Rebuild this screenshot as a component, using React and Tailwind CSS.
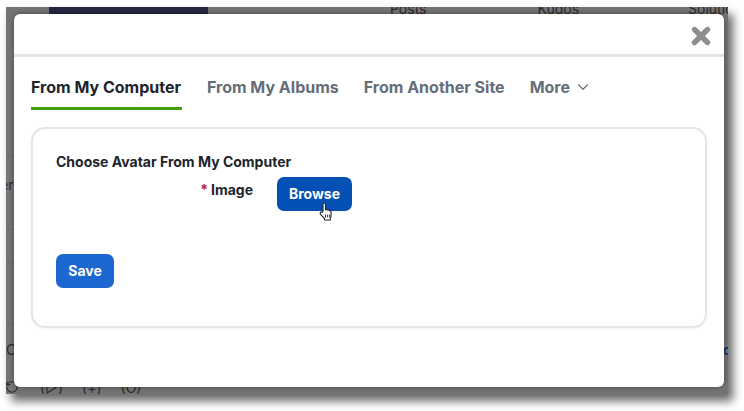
import React from 'react';
import { ChevronDown, RotateCcw, X } from 'lucide-react';

const HandCursor = () => (
  <svg viewBox="0 0 16 20" className="absolute left-[41px] top-[25px] w-[16px] h-[20px]">
    <path
      d="M5 9V2.5C5 1.6 5.5 1 6.2 1s1.3.6 1.3 1.5V8l.3-.6c.8-.4 1.5-.2 1.7.6.8-.4 1.5-.2 1.8.7.8-.3 1.7.1 1.7 1.1v4.4c0 1-.3 1.7-.8 2.6V18H6.5v-1.3L2.6 12.4c-.7-.9-.6-1.7 0-2.2.6-.4 1.3-.3 1.8.2z"
      fill="#fff"
      stroke="#222"
      strokeWidth="1.1"
      strokeLinejoin="round"
    />
    <path d="M7.5 12.5v3M9.6 12.5v3M11.7 12.5v3" stroke="#222" strokeWidth="0.9" />
  </svg>
);

const tabs = ['From My Albums', 'From Another Site'];

export default function App() {
  return (
    <div className="w-[744px] h-[411px] bg-white overflow-hidden pl-[6px] pt-[7px] font-['Inter',sans-serif]">
      {/* dimmed page behind the dialog */}
      <div className="relative w-[722px] h-[387px] bg-[#747474] shadow-[5px_7px_9px_rgba(0,0,0,0.6)] overflow-hidden flex flex-col text-[14px] text-[#2a2a2a]">
        <div className="h-[7px] flex items-end pl-[43px] shrink-0">
          <div className="w-[159px] h-[7px] bg-[#26263f] shrink-0" />
          <span className="ml-[182px] leading-[10px] shrink-0">Posts</span>
          <span className="ml-[111px] leading-[10px] shrink-0">Kudos</span>
          <span className="ml-[109px] leading-[10px] shrink-0">Solutions</span>
        </div>
        <div className="h-[143px] border-b border-[#6a6a6a] shrink-0" />
        <div className="h-[73px] border-b border-[#6a6a6a] flex items-center pb-[18px] shrink-0 -indent-[6px]">er</div>
        <div className="h-[33px] border-b border-[#6a6a6a] shrink-0" />
        <div className="h-[62px] border-b border-[#6a6a6a] shrink-0" />
        <div className="flex-1 flex justify-between items-start pt-[17px]">
          <span className="leading-[16px]">C</span>
          <span className="leading-[16px] font-bold text-[#16366e] -mr-[3px]">c</span>
        </div>
        <div className="h-[14px] flex items-center gap-[19px] shrink-0 -ml-[1px]">
          <RotateCcw className="w-[14px] h-[14px] mr-[2px]" />
          <span>(▷)</span>
          <span>(+)</span>
          <span>(O)</span>
        </div>

        {/* dialog */}
        <div className="absolute left-[8px] top-[7px] w-[710px] h-[373px] bg-white rounded-[6px] shadow-[0_0_5px_rgba(0,0,0,0.4)]">
          <div className="h-[43px] border-b-[3px] border-[#e4e5ea] flex justify-end items-start pt-[9px] pr-[10px]">
            <X className="w-[26px] h-[26px] text-[#8f8f8f]" strokeWidth={5} />
          </div>

          <div className="flex items-start pl-[17px] mt-[16px]">
            <div className="pb-[6px] border-b-[3px] border-[#43a010] pr-px">
              <span className="block text-[16px] leading-[28px] font-bold text-[#20242b]">From My Computer</span>
            </div>
            {tabs.map((t) => (
              <span key={t} className="ml-[25px] text-[16px] leading-[28px] font-bold text-[#656d78]">
                {t}
              </span>
            ))}
            <span className="ml-[25px] flex items-center text-[16px] leading-[28px] font-bold text-[#656d78]">
              More
              <ChevronDown className="ml-[4px] w-[18px] h-[18px]" strokeWidth={1.5} />
            </span>
          </div>

          <div className="mx-[17px] mt-[17px] h-[201px] rounded-[14px] border-2 border-[#e5e6ec] shadow-[0_1px_3px_rgba(0,0,0,0.06)] pl-[23px] pt-[23px]">
            <h3 className="text-[14px] leading-[20px] font-bold text-[#20242b]">Choose Avatar From My Computer</h3>
            <div className="flex items-start mt-[5px]">
              <div className="w-[197px] text-right text-[14px] leading-[20px] font-bold text-[#20242b] pt-[3px]">
                <span className="text-[#b3262e] mr-[3px]">*</span>Image
              </div>
              <div className="relative ml-[24px]">
                <button className="w-[75px] h-[34px] pb-[2px] rounded-[7px] bg-[#0550b5] text-white text-[14px] font-bold">
                  Browse
                </button>
                <HandCursor />
              </div>
            </div>
            <button className="mt-[43px] w-[58px] h-[34px] pb-[2px] rounded-[7px] bg-[#1c68d0] text-white text-[14px] font-bold">
              Save
            </button>
          </div>
        </div>
      </div>
    </div>
  );
}
